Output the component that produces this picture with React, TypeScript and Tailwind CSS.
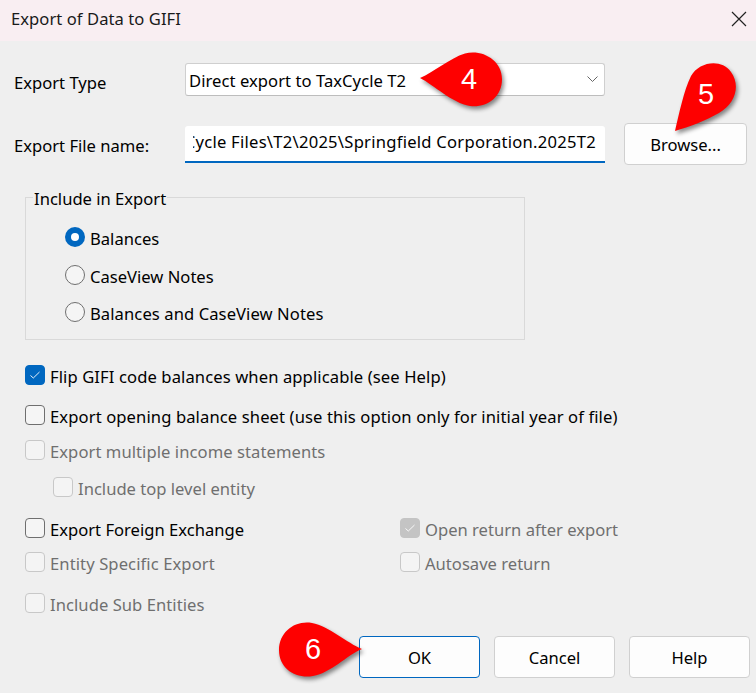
import React from "react";

function Box({ state }: { state: "off" | "on" | "dis" | "disOn" }) {
  const cls =
    state === "on"
      ? "bg-[#0067c0] border-[#0067c0]"
      : state === "disOn"
        ? "bg-[#c4c4c4] border-[#c4c4c4]"
        : state === "dis"
          ? "bg-[#f4f4f4] border-[#c8c8c8]"
          : "bg-[#f5f5f5] border-[#6f6f6f]";
  return (
    <span className={`flex h-[20px] w-[20px] shrink-0 items-center justify-center rounded-[4px] border ${cls}`}>
      {(state === "on" || state === "disOn") && (
        <svg width="12" height="12" viewBox="0 0 12 12" fill="none">
          <path d="M1.5 6.5 L4.3 9 L10.5 3" stroke="white" strokeWidth="0.9" />
        </svg>
      )}
    </span>
  );
}

function Check({ label, state, className = "", textClass = "" }: { label: string; state: "off" | "on" | "dis" | "disOn"; className?: string; textClass?: string }) {
  const disabled = state === "dis" || state === "disOn";
  return (
    <div className={`flex h-[20px] items-center gap-[5px] ${className}`}>
      <Box state={state} />
      <span className={`whitespace-nowrap pt-[3px] ${disabled ? "text-[#6f6f6f]" : "text-black"} ${textClass}`}>{label}</span>
    </div>
  );
}

function Radio({ label, on, className = "", textClass = "" }: { label: string; on?: boolean; className?: string; textClass?: string }) {
  return (
    <div className={`flex h-[20px] items-center gap-[5px] ${className}`}>
      {on ? (
        <span className="flex h-[20px] w-[20px] items-center justify-center rounded-full bg-[#0067c0]">
          <span className="h-[8px] w-[8px] rounded-full bg-white" />
        </span>
      ) : (
        <span className="h-[20px] w-[20px] rounded-full border border-[#6f6f6f] bg-[#f5f5f5]" />
      )}
      <span className={`whitespace-nowrap pt-[3px] text-black ${textClass}`}>{label}</span>
    </div>
  );
}

function Btn({ label, primary }: { label: string; primary?: boolean }) {
  return (
    <button className={`h-[42px] w-[121px] rounded-[4px] border bg-[#fdfdfd] pt-[2px] text-black ${primary ? "border-[#0067c0]" : "border-[#d0d0d0]"}`}>
      {label}
    </button>
  );
}

function Callout({ d, n, vb, className, numClass }: { d: string; n: string; vb: string; className: string; numClass: string }) {
  return (
    <div className={`pointer-events-none absolute ${className}`}>
      <svg viewBox={vb} className="h-full w-full overflow-visible drop-shadow-[2px_3px_2px_rgba(0,0,0,0.45)]">
        <path d={d} fill="#fe0000" />
      </svg>
      <span className={`absolute font-['Liberation_Sans',sans-serif] text-[29px] leading-none text-white ${numClass}`}>{n}</span>
    </div>
  );
}

export default function App() {
  return (
    <div className="relative h-[693px] w-[756px] overflow-hidden bg-[#efefef] font-['Noto_Sans',sans-serif] text-[16.6px] leading-[20px]">
      <div className="flex h-[41px] items-center justify-between bg-[#f9eef2] pb-[4px] pl-[11px] pr-[9px]">
        <span className="tracking-[0.05px] text-[#1a1a1a]">Export of Data to GIFI</span>
        <svg width="16" height="16" viewBox="0 0 16 16" fill="none">
          <path d="M1 1 L15 15 M15 1 L1 15" stroke="#222" strokeWidth="1.2" />
        </svg>
      </div>

      <div className="mt-[22px] flex h-[33px] items-center pl-[14px]">
        <span className="w-[171px] pt-[7px]">Export Type</span>
        <div className="flex h-[33px] w-[420px] items-center justify-between rounded-[3px] border border-[#cfcfcf] border-b-[#bdbdbd] bg-white pl-[3px] pr-[6px]">
          <span className="whitespace-nowrap pt-[2px] tracking-[0.05px]">Direct export to TaxCycle T2</span>
          <svg width="11" height="7" viewBox="0 0 11 7" fill="none">
            <path d="M0.5 0.5 L5.5 5.5 L10.5 0.5" stroke="#666" strokeWidth="1" />
          </svg>
        </div>
      </div>

      <div className="mt-[27px] flex h-[42px] items-start pl-[14px]">
        <span className="mt-[13px] w-[171px]">Export File name:</span>
        <div className="mt-[3px] flex h-[37px] w-[420px] justify-end rounded-t-[3px] border-b-2 border-[#0067c0] bg-white pl-[8px] pr-[9px] pt-[6px]">
          <div className="flex w-full justify-end overflow-hidden whitespace-nowrap">
            <span className="shrink-0 tracking-[0.25px]">Cycle Files\T2\2025\Springfield Corporation.2025T2</span>
          </div>
        </div>
        <button className="ml-[19px] h-[42px] w-[123px] rounded-[4px] border border-[#d0d0d0] bg-[#fdfdfd] pt-[2px] text-black">Browse...</button>
      </div>

      <div className="relative ml-[25px] mt-[32px] h-[143px] w-[500px] border border-[#d9d9d9] pl-[39px] pt-[29px]">
        <span className="absolute left-[7px] top-[-9px] bg-[#efefef] px-[1px]">Include in Export</span>
        <Radio label="Balances" on />
        <Radio label="CaseView Notes" className="mt-[18px]" />
        <Radio label="Balances and CaseView Notes" className="mt-[17px]" textClass="tracking-[0.08px]" />
      </div>

      <div className="pl-[25px]">
        <Check className="mt-[25px]" state="on" label="Flip GIFI code balances when applicable (see Help)" textClass="tracking-[0.1px]" />
        <Check className="mt-[20px]" state="off" label="Export opening balance sheet (use this option only for initial year of file)" textClass="tracking-[0.105px]" />
        <Check className="mt-[15px]" state="dis" label="Export multiple income statements" textClass="tracking-[0.06px]" />
        <Check className="ml-[28px] mt-[17px]" state="dis" label="Include top level entity" />
        <div className="mt-[21px] grid grid-cols-[375px_1fr] gap-y-[14px]">
          <Check state="off" label="Export Foreign Exchange" />
          <Check state="disOn" label="Open return after export" />
          <Check state="dis" label="Entity Specific Export" textClass="tracking-[0.09px]" />
          <Check state="dis" label="Autosave return" />
        </div>
        <Check className="mt-[21px]" state="dis" label="Include Sub Entities" textClass="tracking-[0.05px]" />
      </div>

      <div className="mt-[23px] flex justify-end gap-[14px] pr-[6px]">
        <Btn label="OK" primary />
        <Btn label="Cancel" />
        <Btn label="Help" />
      </div>

      <Callout
        className="left-[420px] top-[52px] h-[54px] w-[82px]"
        vb="0 0 82 54"
        d="M0 26 C14 20 30 6 45 1.5 C62 -3 82 8 82 27 C82 46 66 56 50 54 C32 51 14 33 0 26 Z"
        n="4"
        numClass="left-[41px] top-[13px]"
      />
      <Callout
        className="left-[675px] top-[62px] h-[69px] w-[62px]"
        vb="0 0 62 69"
        d="M0 69 C4 52 9 28 16 14 C24 0 46 -4 56 10 C66 24 60 42 44 51 C32 58 14 65 0 69 Z"
        n="5"
        numClass="left-[23px] top-[18px]"
      />
      <Callout
        className="left-[279px] top-[622px] h-[55px] w-[83px]"
        vb="0 0 83 55"
        d="M83 27 C68 21 50 4 33 1 C16 -2 0 10 0 28 C0 47 17 57 34 54 C52 51 68 33 83 27 Z"
        n="6"
        numClass="left-[26px] top-[13px]"
      />
    </div>
  );
}
